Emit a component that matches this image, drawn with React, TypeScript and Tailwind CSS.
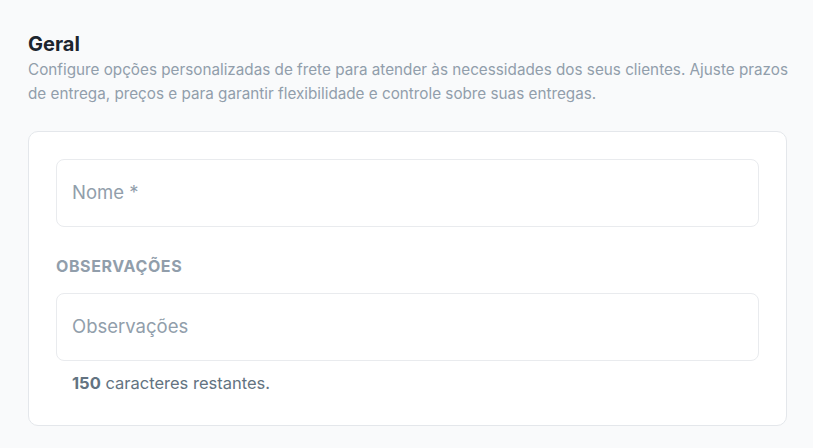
export default function App() {
  return (
    <div className="min-h-[448px] bg-[#f9fafb] pl-[28px] pt-[30px] font-['Inter',sans-serif]">
      <h2 className="text-[20px] font-bold leading-[28px] text-[#1c252e]">Geral</h2>
      <p className="w-[785px] text-[15.25px] leading-[24px] text-[#919eab]">
        Configure opções personalizadas de frete para atender às necessidades dos seus clientes. Ajuste prazos
        <br />
        de entrega, preços e para garantir flexibilidade e controle sobre suas entregas.
      </p>
      <div className="mt-[25px] w-[759px] rounded-[10px] border border-[#e4e7eb] bg-white px-[27px] pb-[30px] pt-[27px]">
        <div className="flex h-[68px] items-center rounded-[8px] border border-[#e9ebee] px-[15px] text-[18.5px] text-[#919eab]">
          Nome *
        </div>
        <div className="mt-[27px] text-[16px] font-bold leading-[24px] tracking-[0.6px] text-[#919eab]">OBSERVAÇÕES</div>
        <div className="mt-[15px] flex h-[68px] items-center rounded-[8px] border border-[#e9ebee] px-[15px] text-[18.5px] text-[#919eab]">
          Observações
        </div>
        <div className="mt-[10px] px-[16px] text-[16.5px] leading-[24px] text-[#637381]">
          <span className="font-bold">150</span> caracteres restantes.
        </div>
      </div>
    </div>
  )
}
